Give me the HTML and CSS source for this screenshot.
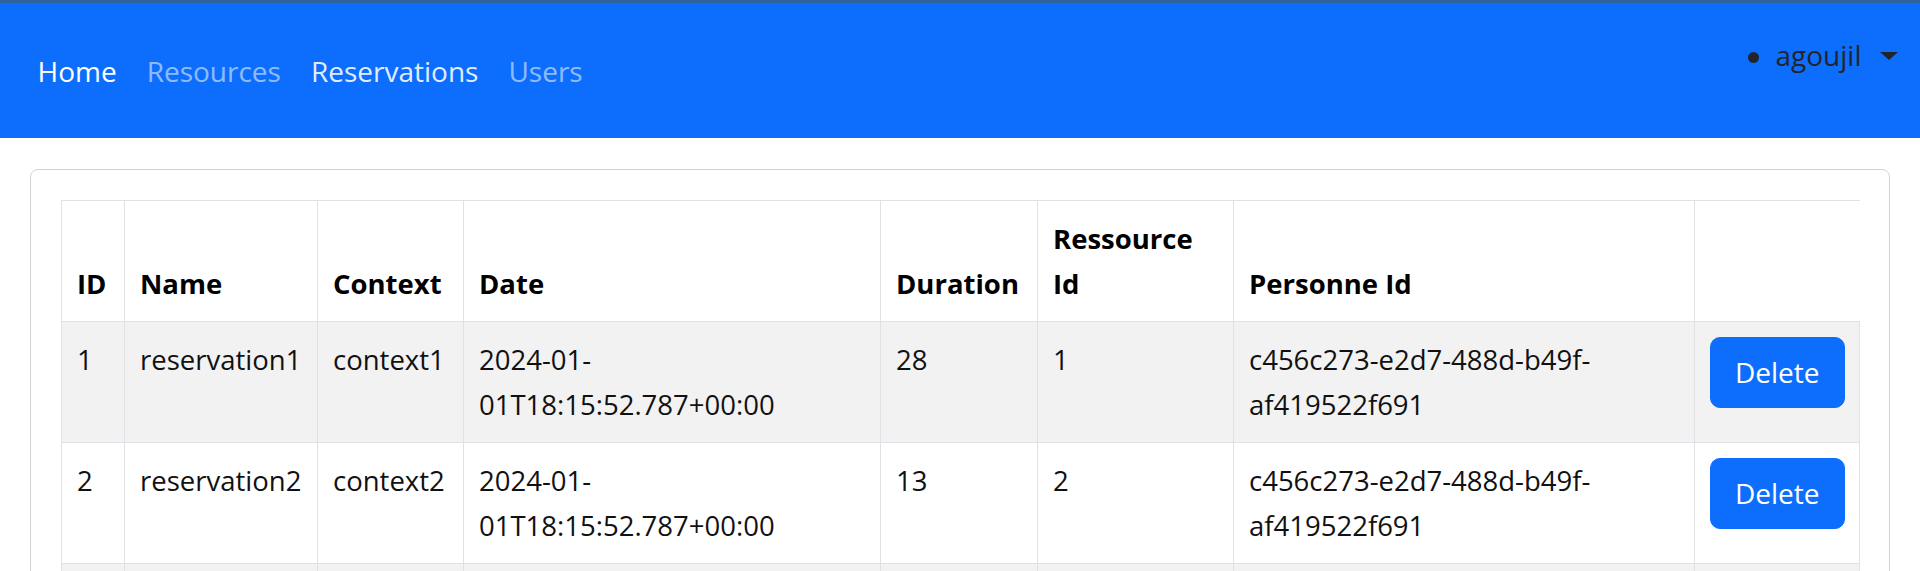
FILE: index.html
```html
<!DOCTYPE html>
<html lang="en">
<head>
<meta charset="utf-8">
<title>Reservations</title>
<link rel="stylesheet" href="styles.css">
</head>
<body>
<div class="top-strip"></div>
<nav class="navbar">
  <div class="nav-inner">
    <ul class="nav-links">
      <li><a class="nav-link active" href="#">Home</a></li>
      <li><a class="nav-link" href="#">Resources</a></li>
      <li><a class="nav-link current" href="#">Reservations</a></li>
      <li><a class="nav-link" href="#">Users</a></li>
    </ul>
    <ul class="user-menu">
      <li class="user-item">
        <span class="bullet"></span>
        <a class="user-toggle" href="#">agoujil<span class="caret"></span></a>
      </li>
    </ul>
  </div>
</nav>
<main class="page">
  <div class="card">
    <table class="data-table">
      <colgroup>
        <col class="c-id">
        <col class="c-name">
        <col class="c-context">
        <col class="c-date">
        <col class="c-duration">
        <col class="c-res">
        <col class="c-person">
        <col class="c-action">
      </colgroup>
      <thead>
        <tr>
          <th>ID</th>
          <th>Name</th>
          <th>Context</th>
          <th>Date</th>
          <th>Duration</th>
          <th>Ressource Id</th>
          <th>Personne Id</th>
          <th></th>
        </tr>
      </thead>
      <tbody>
        <tr>
          <td>1</td>
          <td>reservation1</td>
          <td>context1</td>
          <td>2024-01-01T18:15:52.787+00:00</td>
          <td>28</td>
          <td>1</td>
          <td>c456c273-e2d7-488d-b49f-af419522f691</td>
          <td><button class="btn-delete" type="button">Delete</button></td>
        </tr>
        <tr>
          <td>2</td>
          <td>reservation2</td>
          <td>context2</td>
          <td>2024-01-01T18:15:52.787+00:00</td>
          <td>13</td>
          <td>2</td>
          <td>c456c273-e2d7-488d-b49f-af419522f691</td>
          <td><button class="btn-delete" type="button">Delete</button></td>
        </tr>
        <tr>
          <td>3</td>
          <td>reservation3</td>
          <td>context3</td>
          <td>2024-01-01T18:15:52.787+00:00</td>
          <td>7</td>
          <td>3</td>
          <td>c456c273-e2d7-488d-b49f-af419522f691</td>
          <td><button class="btn-delete" type="button">Delete</button></td>
        </tr>
      </tbody>
    </table>
  </div>
</main>
</body>
</html>
```
FILE: styles.css
```css
html, body {
  margin: 0;
  padding: 0;
  background: #ffffff;
}

body {
  font-family: "Open Sans", "Noto Sans", "Liberation Sans", sans-serif;
  font-size: 27.5px;
  line-height: 45px;
  color: #212529;
}

.top-strip {
  height: 3px;
  background: #3162a0;
}

.navbar {
  background: #0d6efd;
  padding: 30px 0;
}

.nav-inner {
  display: flex;
  align-items: center;
  justify-content: space-between;
  padding: 0 22.5px;
}

.nav-links {
  display: flex;
  list-style: none;
  margin: 0;
  padding: 0;
}

.nav-link {
  display: block;
  padding: 16px 15px 14px;
  font-size: 28px;
  color: rgba(255, 255, 255, 0.55);
  text-decoration: none;
}

.nav-link.active {
  color: #ffffff;
}

.nav-link.current {
  color: rgba(255, 255, 255, 0.9);
}

.user-menu {
  list-style: none;
  margin: 0 0 30px;
  padding: 0;
}

.user-item {
  display: flex;
  align-items: center;
}

.bullet {
  width: 11px;
  height: 11px;
  border-radius: 50%;
  background: #212529;
  margin: 3px 17px 0 0;
}

.user-toggle {
  display: flex;
  align-items: center;
  font-size: 28px;
  color: #212529;
  text-decoration: none;
}

.caret {
  width: 0;
  height: 0;
  border-top: 8px solid #212529;
  border-left: 9px solid transparent;
  border-right: 9px solid transparent;
  margin-left: 18px;
}

.page {
  padding: 31px 30px;
}

.card {
  border: 1px solid #d2d2d2;
  border-radius: 8px;
  padding: 30px;
}

.data-table {
  width: 100%;
  border-collapse: collapse;
  table-layout: fixed;
  color: #111111;
}

.c-id { width: 63px; }
.c-name { width: 193px; }
.c-context { width: 146px; }
.c-date { width: 417px; }
.c-duration { width: 157px; }
.c-res { width: 196px; }
.c-person { width: 461px; }
.c-action { width: 165px; }

.data-table th,
.data-table td {
  border: 1px solid #dee2e6;
  padding: 15px;
  text-align: left;
  vertical-align: top;
}

.data-table thead th {
  vertical-align: bottom;
  font-weight: 700;
  color: #000000;
}

.data-table thead th:last-child {
  border-right: 0;
}

.data-table tbody tr:nth-child(odd) td {
  background: #f2f2f2;
}

.btn-delete {
  display: inline-block;
  font-family: inherit;
  font-size: 28px;
  line-height: 45px;
  padding: 12px 24px;
  color: #ffffff;
  background: #0d6efd;
  border: 1px solid #0d6efd;
  border-radius: 10px;
  cursor: pointer;
}
```
